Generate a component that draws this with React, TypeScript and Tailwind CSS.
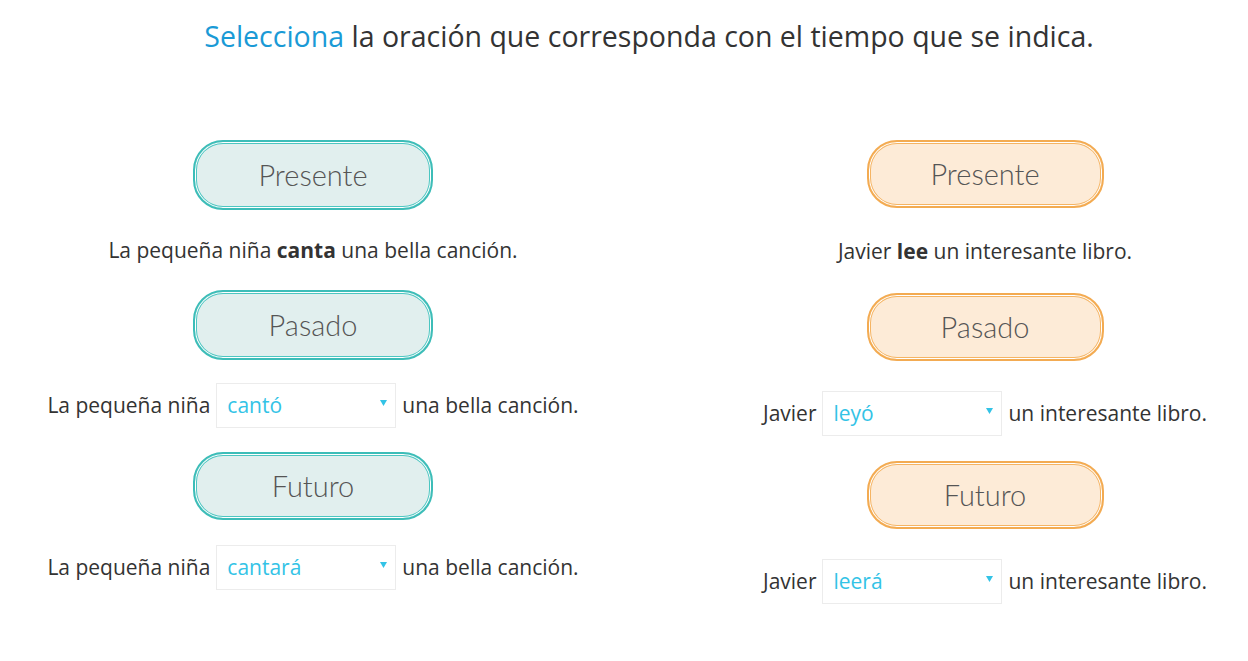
import React from 'react'

type Tone = 'teal' | 'orange'

const pillClass: Record<Tone, string> = {
  teal: 'border-[#3dbdb8] bg-[#e1efee] shadow-[inset_0_0_0_1px_#ffffff,inset_0_0_0_2px_#4cc6c1]',
  orange: 'border-[#f3ab52] bg-[#fdebd7] shadow-[inset_0_0_0_1px_#ffffff,inset_0_0_0_2px_#f5b463]',
}

const Pill: React.FC<{ tone: Tone; label: string; className?: string }> = ({ tone, label, className }) => (
  <div
    className={`flex items-center justify-center rounded-[30px] border-[2.5px] font-['Lato',sans-serif] text-[29px] font-light text-[#555] ${pillClass[tone]} ${className ?? ''}`}
  >
    {label}
  </div>
)

const Dropdown: React.FC<{ value: string }> = ({ value }) => (
  <div className="mx-[6px] flex h-[45px] w-[180px] items-center justify-between border border-[#ececec] bg-white pl-[10px] pr-[8px]">
    <span className="text-[21px] text-[#33c3e6]">{value}</span>
    <svg width="7" height="6" viewBox="0 0 7 6" className="mb-[6px]">
      <path d="M0 0h7L3.5 6z" fill="#33c3e6" />
    </svg>
  </div>
)

const App: React.FC = () => {
  return (
    <div className="h-[661px] w-[1248px] bg-white font-['Open_Sans',sans-serif] text-[#333]">
      <h1 className="pl-[50px] pt-[16px] text-center text-[28.5px] leading-[40px] text-[#333]">
        <span className="text-[#1a9ad6]">Selecciona</span> la oración que corresponda con el tiempo que se indica.
      </h1>

      <div className="mt-[84px] grid grid-cols-[626px_1fr]">
        {/* left column */}
        <div className="flex flex-col items-center">
          <Pill tone="teal" label="Presente" className="h-[70px] w-[240px]" />
          <p className="mt-[25px] text-[21px] leading-[30px]">
            La pequeña niña <b>canta</b> una bella canción.
          </p>
          <Pill tone="teal" label="Pasado" className="mt-[25px] h-[70px] w-[240px]" />
          <div className="mt-[23px] flex items-center text-[21px]">
            La pequeña niña <Dropdown value="cantó" /> una bella canción.
          </div>
          <Pill tone="teal" label="Futuro" className="mt-[24px] h-[68px] w-[240px]" />
          <div className="mt-[25px] flex items-center text-[21px]">
            La pequeña niña <Dropdown value="cantará" /> una bella canción.
          </div>
        </div>

        {/* right column */}
        <div className="flex flex-col items-center pl-[96px]">
          <Pill tone="orange" label="Presente" className="h-[68px] w-[237px]" />
          <p className="mt-[28px] text-[21px] leading-[30px]">
            Javier <b>lee</b> un interesante libro.
          </p>
          <Pill tone="orange" label="Pasado" className="mt-[27px] h-[68px] w-[237px]" />
          <div className="mt-[30px] flex items-center text-[21px]">
            Javier <Dropdown value="leyó" /> un interesante libro.
          </div>
          <Pill tone="orange" label="Futuro" className="mt-[25px] h-[68px] w-[237px]" />
          <div className="mt-[30px] flex items-center text-[21px]">
            Javier <Dropdown value="leerá" /> un interesante libro.
          </div>
        </div>
      </div>
    </div>
  )
}

export default App
